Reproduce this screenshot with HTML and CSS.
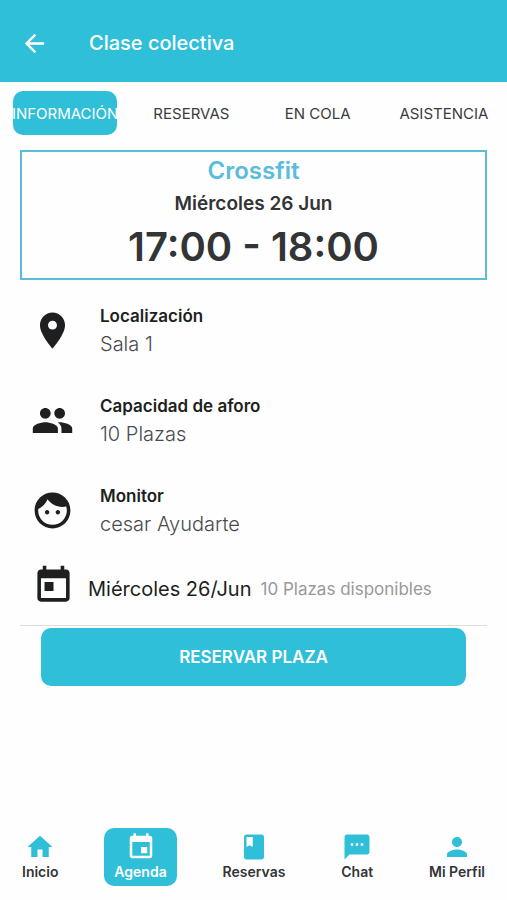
FILE: index.html
```
<!DOCTYPE html>
<html lang="es">
<head>
  <meta charset="UTF-8">
  <meta name="viewport" content="width=device-width, initial-scale=1.0">
  <title>Clase colectiva</title>
  <link rel="stylesheet" href="styles.css">
</head>
<body>
  <header class="topbar">
    <button class="back" type="button" aria-label="Volver">
      <svg viewBox="0 0 24 24"><path d="M20 11H7.83l5.59-5.59L12 4l-8 8 8 8 1.41-1.41L7.83 13H20v-2z"/></svg>
    </button>
    <h1>Clase colectiva</h1>
  </header>

  <div class="tabs">
    <button class="tab active" type="button">INFORMACIÓN</button>
    <button class="tab" type="button">RESERVAS</button>
    <button class="tab" type="button">EN COLA</button>
    <button class="tab" type="button">ASISTENCIA</button>
  </div>

  <main>
    <section class="summary">
      <h2>Crossfit</h2>
      <p class="date">Miércoles 26 Jun</p>
      <p class="hours">17:00 - 18:00</p>
    </section>

    <ul class="details">
      <li>
        <svg viewBox="0 0 24 24"><path d="M12 2C8.13 2 5 5.13 5 9c0 5.25 7 13 7 13s7-7.75 7-13c0-3.87-3.13-7-7-7zm0 9.5c-1.38 0-2.5-1.12-2.5-2.5s1.12-2.5 2.5-2.5 2.5 1.12 2.5 2.5-1.12 2.5-2.5 2.5z"/></svg>
        <div>
          <h3>Localización</h3>
          <p>Sala 1</p>
        </div>
      </li>
      <li>
        <svg viewBox="0 0 24 24"><path d="M16 11c1.66 0 2.99-1.34 2.99-3S17.66 5 16 5s-3 1.34-3 3 1.34 3 3 3zm-8 0c1.66 0 2.99-1.34 2.99-3S9.66 5 8 5 5 6.34 5 8s1.34 3 3 3zm0 2c-2.33 0-7 1.17-7 3.5V19h14v-2.5c0-2.33-4.67-3.5-7-3.5zm8 0c-.29 0-.62.02-.97.05 1.16.84 1.97 1.97 1.97 3.45V19h6v-2.5c0-2.33-4.67-3.5-7-3.5z"/></svg>
        <div>
          <h3>Capacidad de aforo</h3>
          <p>10 Plazas</p>
        </div>
      </li>
      <li>
        <svg viewBox="0 0 24 24"><path d="M9 11.75c-.69 0-1.25.56-1.25 1.25s.56 1.25 1.25 1.25 1.25-.56 1.25-1.25-.56-1.25-1.25-1.25zm6 0c-.69 0-1.25.56-1.25 1.25s.56 1.25 1.25 1.25 1.25-.56 1.25-1.25-.56-1.25-1.25-1.25zM12 2C6.48 2 2 6.48 2 12s4.48 10 10 10 10-4.48 10-10S17.52 2 12 2zm0 18c-4.41 0-8-3.59-8-8 0-.29.02-.58.05-.86 2.36-1.05 4.23-2.98 5.21-5.37C11.07 8.33 14.05 10 17.42 10c.78 0 1.53-.09 2.25-.26.21.71.33 1.47.33 2.26 0 4.41-3.59 8-8 8z"/></svg>
        <div>
          <h3>Monitor</h3>
          <p>cesar Ayudarte</p>
        </div>
      </li>
    </ul>

    <div class="session">
      <svg viewBox="0 0 24 24"><path d="M19 3h-1V1h-2v2H8V1H6v2H5c-1.11 0-1.99.9-1.99 2L3 19c0 1.1.89 2 2 2h14c1.1 0 2-.9 2-2V5c0-1.1-.9-2-2-2zm0 16H5V8h14v11zM7 10h5v5H7z"/></svg>
      <span class="day">Miércoles 26/Jun</span>
      <span class="free">10 Plazas disponibles</span>
    </div>

    <button class="book" type="button">RESERVAR PLAZA</button>
  </main>

  <nav class="bottom-nav">
    <a href="#inicio">
      <svg viewBox="0 0 24 24"><path d="M10 20v-6h4v6h5v-8h3L12 3 2 12h3v8z"/></svg>
      Inicio
    </a>
    <a href="#agenda" class="active">
      <svg viewBox="0 0 24 24"><path d="M17 12h-5v5h5v-5zM16 1v2H8V1H6v2H5c-1.11 0-1.99.9-1.99 2L3 19c0 1.1.89 2 2 2h14c1.1 0 2-.9 2-2V5c0-1.1-.9-2-2-2h-1V1h-2zm3 18H5V8h14v11z"/></svg>
      Agenda
    </a>
    <a href="#reservas">
      <svg viewBox="0 0 24 24"><path d="M18 2H6c-1.1 0-2 .9-2 2v16c0 1.1.9 2 2 2h12c1.1 0 2-.9 2-2V4c0-1.1-.9-2-2-2zM6 4h5v8l-2.5-1.5L6 12V4z"/></svg>
      Reservas
    </a>
    <a href="#chat">
      <svg viewBox="0 0 24 24"><path d="M20 2H4c-1.1 0-1.99.9-1.99 2L2 22l4-4h14c1.1 0 2-.9 2-2V4c0-1.1-.9-2-2-2zM9 11H7V9h2v2zm4 0h-2V9h2v2zm4 0h-2V9h2v2z"/></svg>
      Chat
    </a>
    <a href="#perfil">
      <svg viewBox="0 0 24 24"><path d="M12 12c2.21 0 4-1.79 4-4s-1.79-4-4-4-4 1.79-4 4 1.79 4 4 4zm0 2c-2.67 0-8 1.34-8 4v2h16v-2c0-2.66-5.33-4-8-4z"/></svg>
      Mi Perfil
    </a>
  </nav>
</body>
</html>
```
FILE: styles.css
```
* {
  box-sizing: border-box;
}

body {
  margin: 0;
  min-height: 100vh;
  display: flex;
  flex-direction: column;
  background: #fefefe;
  color: #1d1f20;
  font-family: Inter, "Liberation Sans", sans-serif;
}

h1, h2, h3, p, ul {
  margin: 0;
  padding: 0;
}

button {
  border: none;
  padding: 0;
  background: none;
  color: inherit;
  font: inherit;
  cursor: pointer;
}

svg {
  display: block;
  flex: none;
  fill: currentColor;
}

/* header */
.topbar {
  display: flex;
  align-items: center;
  gap: 40px;
  height: 82px;
  padding: 4px 20px 0;
  background: #30bfd9;
  color: #fff;
}

.back svg {
  width: 29px;
  height: 29px;
}

.topbar h1 {
  font-size: 20px;
  font-weight: 500;
}

/* tabs */
.tabs {
  display: grid;
  grid-template-columns: repeat(4, 1fr);
  padding: 9px 0 0 2px;
}

.tab {
  display: flex;
  justify-content: center;
  align-items: center;
  min-width: 0;
  height: 44px;
  margin: 0 11px;
  border-radius: 10px;
  color: #3a3c3d;
  font-size: 15px;
  white-space: nowrap;
}

.tab.active {
  background: #30bfd9;
  color: #fff;
}

/* class info */
main {
  flex: 1;
  padding: 15px 20px 0;
}

.summary {
  border: 2px solid #5bbcd9;
  height: 130px;
  padding-top: 4px;
  text-align: center;
  color: #333435;
}

.summary h2 {
  color: #5bbcdc;
  font-size: 24px;
  line-height: 30px;
  font-weight: 600;
}

.summary .date {
  font-size: 19px;
  line-height: 36px;
  font-weight: 600;
}

.summary .hours {
  font-size: 40px;
  line-height: 50px;
  font-weight: 600;
}

.details {
  list-style: none;
  padding: 21px 11px 0;
}

.details li {
  display: flex;
  align-items: center;
  gap: 26px;
  height: 58px;
  margin-bottom: 32px;
}

.details svg,
.session svg {
  width: 43px;
  height: 43px;
}

.details h3 {
  font-size: 17px;
  line-height: 28px;
  font-weight: 600;
}

.details p {
  color: #484b4d;
  font-size: 20px;
  line-height: 28px;
  font-weight: 300;
}

.session {
  display: flex;
  align-items: center;
  height: 74px;
  margin-top: -19px;
  padding: 0 12px;
  border-bottom: 1px solid #dedede;
}

.session svg {
  margin-bottom: 6px;
}

.session .day {
  margin: 0 9px 0 13px;
  font-size: 20px;
}

.session .free {
  color: #97999a;
  font-size: 17px;
}

.book {
  display: block;
  width: calc(100% - 42px);
  height: 58px;
  margin: 2px auto 0;
  border-radius: 10px;
  background: #30bfd9;
  color: #fff;
  font-size: 17px;
  font-weight: 600;
}

/* bottom navigation */
.bottom-nav {
  display: flex;
  justify-content: space-between;
  padding: 0 12px 14px;
}

.bottom-nav a {
  display: flex;
  flex-direction: column;
  align-items: center;
  height: 58px;
  padding: 4px 10px;
  border-radius: 10px;
  color: #333536;
  font-size: 14px;
  line-height: 20px;
  font-weight: 600;
  text-decoration: none;
}

.bottom-nav svg {
  width: 30px;
  height: 30px;
  color: #30bfd9;
}

.bottom-nav .active {
  background: #30bfd9;
  color: #fff;
}

.bottom-nav .active svg {
  color: #fff;
}
```
